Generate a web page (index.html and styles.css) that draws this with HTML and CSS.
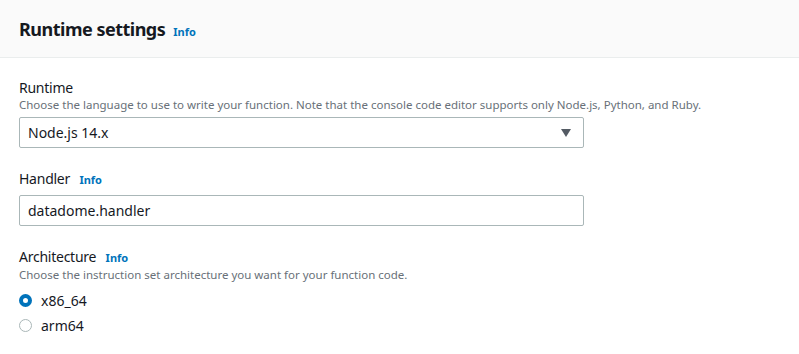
FILE: index.html
```html
<!DOCTYPE html>
<html lang="en">
<head>
  <meta charset="UTF-8">
  <meta name="viewport" content="width=device-width, initial-scale=1.0">
  <title>Runtime settings</title>
  <link rel="stylesheet" href="styles.css">
</head>
<body>
  <div class="panel">
    <div class="panel-header">
      <h2>Runtime settings</h2>
      <a class="info" href="#">Info</a>
    </div>

    <div class="panel-body">
      <!-- Runtime -->
      <div class="field">
        <div class="label">Runtime</div>
        <div class="desc">Choose the language to use to write your function. Note that the console code editor supports only Node.js, Python, and Ruby.</div>
        <div class="select">
          <span>Node.js 14.x</span>
          <span class="caret"></span>
        </div>
      </div>

      <!-- Handler -->
      <div class="field">
        <div class="label">Handler <a class="info" href="#">Info</a></div>
        <div class="input">datadome.handler</div>
      </div>

      <!-- Architecture -->
      <div class="field">
        <div class="label">Architecture <a class="info" href="#">Info</a></div>
        <div class="desc">Choose the instruction set architecture you want for your function code.</div>
        <div class="radio-group">
          <label class="radio-row"><span class="radio checked"></span>x86_64</label>
          <label class="radio-row"><span class="radio"></span>arm64</label>
        </div>
      </div>
    </div>
  </div>
</body>
</html>
```

FILE: styles.css
```css
body {
  margin: 0;
  font-family: "Noto Sans", Arial, sans-serif;
  color: #16191f;
  background: #fff;
}
.panel-header {
  display: flex;
  align-items: baseline;
  gap: 8px;
  height: 58px;
  box-sizing: border-box;
  padding: 17px 19px 0;
  background-color: #fafafa;
  border-bottom: 1px solid #eaeded;
}
.panel-header h2 {
  margin: 0;
  font-size: 18px;
  line-height: 24px;
  font-weight: 700;
  letter-spacing: -0.5px;
}
.info {
  color: #0073bb;
  font-size: 11px;
  font-weight: 700;
  text-decoration: none;
  letter-spacing: 0;
}
.label .info {
  margin-left: 6px;
}
.panel-body {
  padding: 21px 19px 0;
}
.field {
  margin-bottom: 22px;
}
.label {
  font-size: 14px;
  line-height: 18px;
  letter-spacing: -0.25px;
}
.desc {
  font-size: 11.5px;
  line-height: 15px;
  color: #687078;
}
.select, .input {
  display: flex;
  align-items: center;
  justify-content: space-between;
  width: 565px;
  height: 31px;
  box-sizing: border-box;
  margin-top: 5px;
  padding: 0 12px 0 8px;
  border: 1px solid #aab7b8;
  border-radius: 2px;
  font-size: 14px;
}
.input {
  margin-top: 6px;
}
.caret {
  width: 0;
  height: 0;
  border-left: 5px solid transparent;
  border-right: 5px solid transparent;
  border-top: 8px solid #545b64;
}
.radio-group {
  margin-top: 6px;
}
.radio-row {
  display: flex;
  align-items: center;
  gap: 9px;
  height: 25px;
  font-size: 14px;
}
.radio {
  width: 13px;
  height: 13px;
  box-sizing: border-box;
  border-radius: 50%;
  border: 1.5px solid #aab7b8;
  background: #fff;
}
.radio.checked {
  border: 4px solid #0073bb;
}
```
